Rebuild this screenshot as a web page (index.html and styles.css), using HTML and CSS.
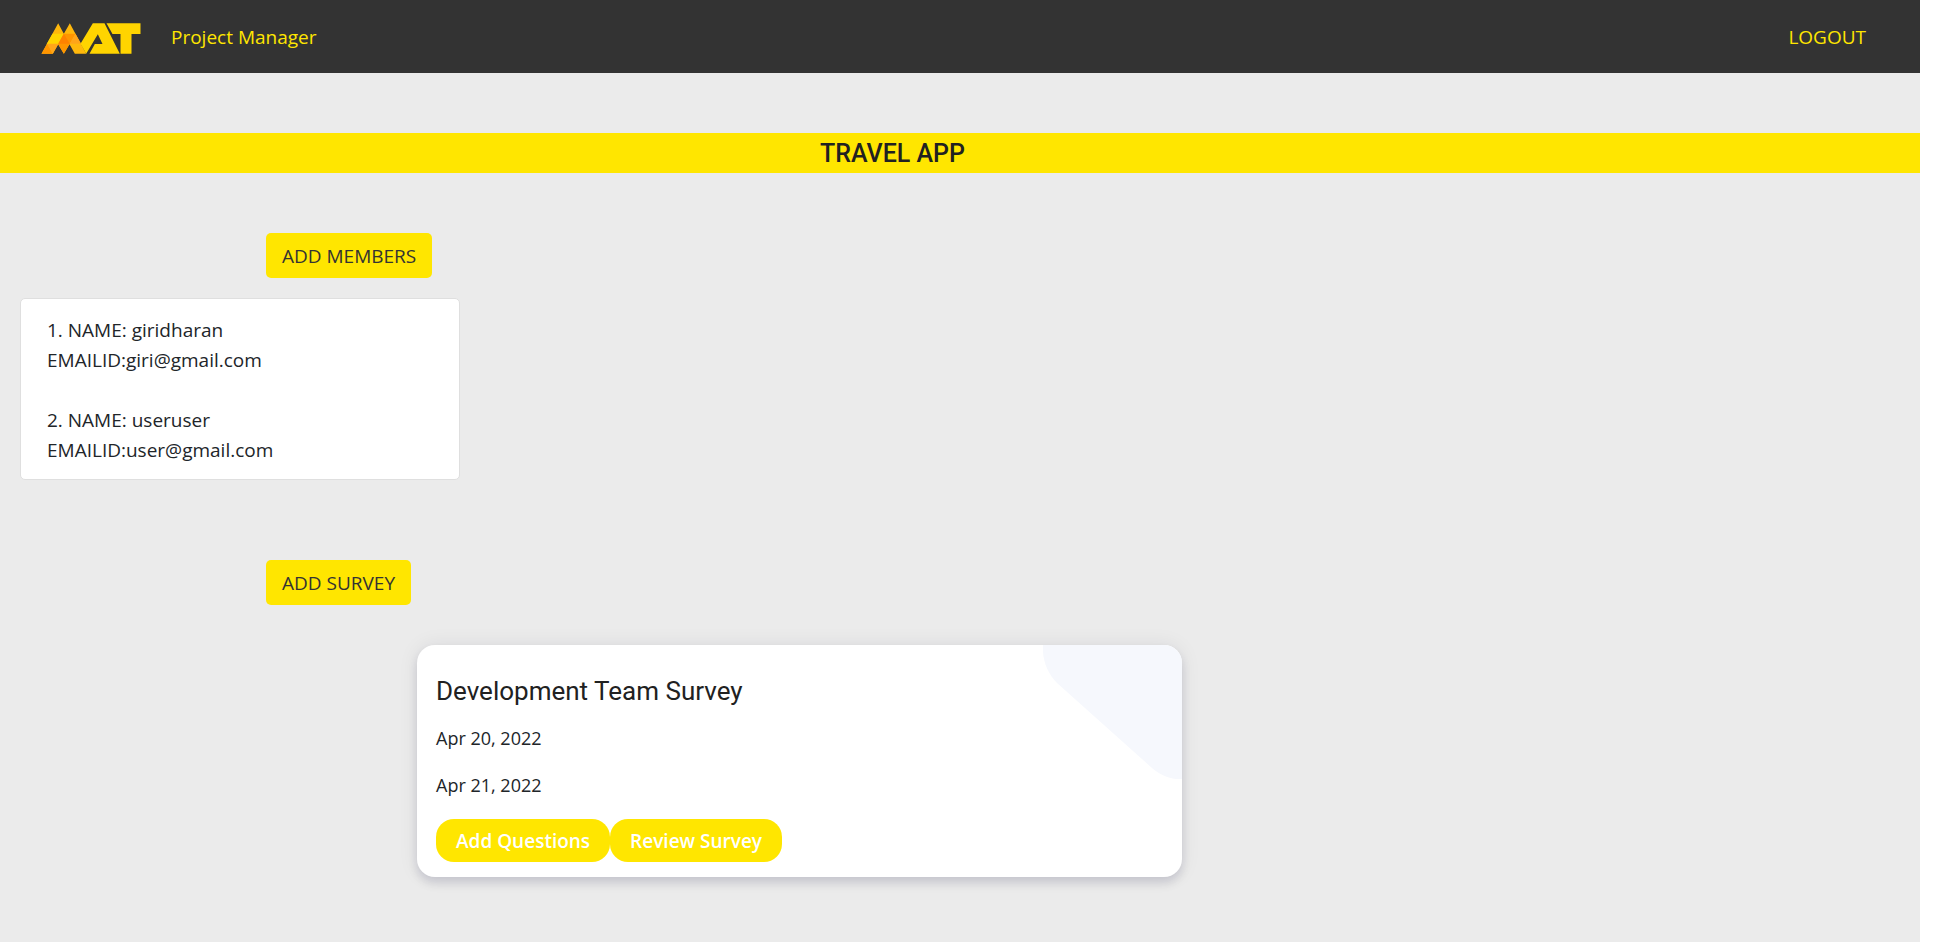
FILE: index.html
```html
<!DOCTYPE html>
<html lang="en">
<head>
<meta charset="utf-8">
<title>Project Manager</title>
<link rel="stylesheet" href="styles.css">
</head>
<body>
<div class="page">
  <header class="navbar">
    <a class="brand" href="#" aria-label="MAT">
      <svg class="logo" viewBox="33 39 297 93" aria-hidden="true">
        <path fill="#ffb80c" d="M83 40 100 71 118 40 167 131H133L117 103 100 131 83 103 67 131H33Z"/>
        <path fill="#ffd400" d="M66 71H100L83 103H48Z"/>
        <path fill="#ff9500" d="M50 101 67 131H33ZM100 71H135L117 103 100 131 83 103Z"/>
        <path fill="#ffa51a" d="M50 101H84L67 131ZM135 71 152 101H118Z"/>
        <path fill="#ff8200" d="M83 101H118L100 71Z"/>
        <path fill="#ffd400" d="M187 40H222L268 131H177L193 102H216L202 73 167 131 150 101ZM228 40H330V72H303V131H270V72H246Z"/>
      </svg>
    </a>
    <a class="nav-link" href="#">Project Manager</a>
    <a class="nav-link logout" href="#">LOGOUT</a>
  </header>
  <main>
    <h1 class="project-title">TRAVEL APP</h1>
    <section class="members">
      <button class="action" type="button">ADD MEMBERS</button>
      <div class="member-card">
        <p>1. NAME: giridharan<br>EMAILID:giri@gmail.com</p>
        <p>2. NAME: useruser<br>EMAILID:user@gmail.com</p>
      </div>
    </section>
    <section class="surveys">
      <button class="action" type="button">ADD SURVEY</button>
      <article class="survey-card">
        <svg class="corner" viewBox="0 0 139 134" aria-hidden="true"><path fill="#f6f8fd" d="M0 0C-1 14 4 28 14 38L109 123C118 131 129 135 139 134V0Z"/></svg>
        <h2>Development Team Survey</h2>
        <p>Apr 20, 2022</p>
        <p>Apr 21, 2022</p>
        <div class="survey-actions">
          <button class="pill" type="button">Add Questions</button>
          <button class="pill" type="button">Review Survey</button>
        </div>
      </article>
    </section>
  </main>
</div>
</body>
</html>
```
FILE: styles.css
```css
* { box-sizing: border-box; }
body {
  margin: 0;
  background: #fff;
  color: #212529;
  font: 19px/30px "Segoe UI", "Open Sans", sans-serif;
}
.page { margin-right: 18px; min-height: 100vh; background: #ebebeb; }
h1, h2, p { margin: 0; }
button { font: inherit; border: 0; cursor: pointer; }
.navbar {
  display: flex;
  align-items: center;
  height: 73px;
  padding: 0 54px 0 41px;
  background: #333;
}
.brand { display: flex; margin: 4px 30px 0 0; }
.logo { width: 100px; height: 31px; }
.nav-link { color: #ffe600; text-decoration: none; }
.logout { margin-left: auto; }
.project-title {
  margin-top: 60px;
  padding: 2px 0 0 820px;
  background: #ffe600;
  font: 500 25px/38px Roboto, sans-serif;
  color: #212121;
}
.members { padding: 60px 20px 0; }
.action {
  display: block;
  margin-left: 246px;
  height: 45px;
  padding: 0 16px;
  border-radius: 5px;
  background: #ffe600;
  color: #333;
}
.member-card {
  display: grid;
  gap: 30px;
  width: 440px;
  margin-top: 20px;
  padding: 16px 26px 14px;
  border: 1px solid #dfdfdf;
  border-radius: 5px;
  background: #fff;
}
.surveys { padding: 80px 20px 60px; }
.survey-card {
  position: relative;
  width: 765px;
  margin: 40px 0 0 397px;
  padding: 31px 19px 15px;
  border-radius: 18px;
  background: #fff;
  box-shadow: 0 6px 10px rgba(0, 0, 60, 0.12), 0 0 20px rgba(0, 0, 50, 0.08);
  overflow: hidden;
}
.corner { position: absolute; top: 0; right: 0; width: 139px; height: 134px; }
.survey-card h2 { font: 400 26px/30px Roboto, sans-serif; color: #212121; }
.survey-card p { margin-top: 17px; font-size: 18px; }
.survey-actions { display: flex; margin-top: 19px; }
.pill {
  height: 43px;
  padding: 0 20px;
  border-radius: 18px;
  background: #ffe600;
  color: #fff;
  font-weight: 600;
}
```
